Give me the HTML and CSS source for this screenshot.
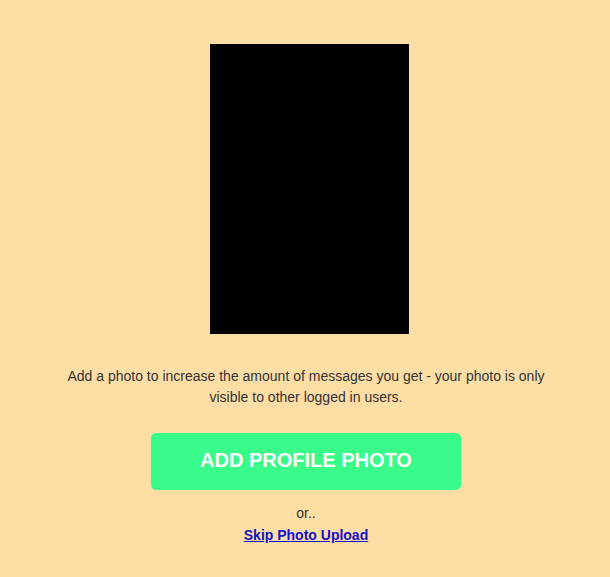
FILE: index.html
```html
<!DOCTYPE html>
<html lang="en">
<head>
<meta charset="utf-8">
<title>Add profile photo</title>
<link rel="stylesheet" href="styles.css">
</head>
<body>
<main class="page">
  <div class="photo-frame"><div class="photo"></div></div>
  <p class="intro">Add a photo to increase the amount of messages you get - your photo is only visible to other logged in users.</p>
  <button class="add-btn" type="button">ADD PROFILE PHOTO</button>
  <p class="or">or..</p>
  <a class="skip" href="#">Skip Photo Upload</a>
</main>
</body>
</html>
```
FILE: styles.css
```css
html, body {
  margin: 0;
  padding: 0;
  background: #ffdea6;
}
body {
  font-family: "Liberation Sans", Arial, sans-serif;
  color: #333333;
}
.page {
  width: 612px;
  display: flex;
  flex-direction: column;
  align-items: center;
  padding-top: 44px;
}
.photo-frame {
  padding-left: 7px;
}
.photo {
  width: 199px;
  height: 290px;
  background: #000;
}
.intro {
  margin: 32px 0 0;
  width: 500px;
  font-size: 14px;
  line-height: 21px;
  text-align: center;
}
.add-btn {
  margin-top: 25px;
  width: 310px;
  height: 57px;
  border: none;
  border-radius: 5px;
  background: #38fb8a;
  color: #ffffff;
  font-family: "Liberation Sans", Arial, sans-serif;
  font-weight: bold;
  font-size: 20px;
  padding: 0 0 2px;
}
.or {
  margin: 13px 0 0;
  font-size: 14px;
  line-height: 20px;
}
.skip {
  margin-top: 2px;
  font-size: 14px;
  line-height: 20px;
  font-weight: bold;
  color: #1111cc;
  text-decoration: underline;
}
```
